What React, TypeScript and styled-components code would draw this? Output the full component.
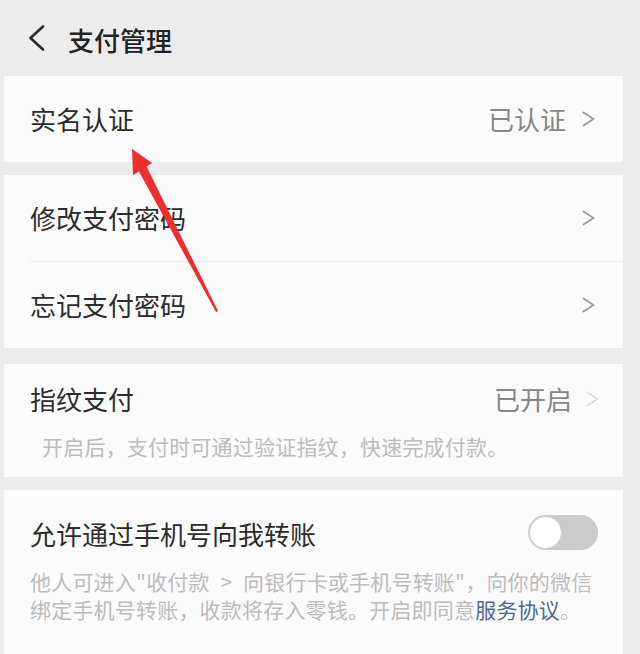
import React from "react";
import styled, { createGlobalStyle } from "styled-components";

const Global = createGlobalStyle`
  html, body { margin: 0; padding: 0; background: #ececec; }
  body { font-family: "Noto Sans CJK SC", "Noto Sans", sans-serif; -webkit-font-smoothing: antialiased; }
`;

const Page = styled.div`
  position: relative;
  width: 640px;
  height: 654px;
  overflow: hidden;
  background: #ececec;
  display: flex;
  flex-direction: column;
`;

const Header = styled.div`
  height: 76px;
  display: flex;
  align-items: center;
  padding-left: 28px;
  gap: 22px;
  flex-shrink: 0;
`;

const Title = styled.div`
  font-size: 26px;
  font-weight: 500;
  color: #222;
  line-height: 1;
  margin-top: 4px;
`;

const Card = styled.div<{ $gap?: number }>`
  width: 619px;
  margin-left: 4px;
  margin-top: ${(p) => p.$gap ?? 0}px;
  background: #fbfbfc;
  flex-shrink: 0;
`;

const Row = styled.div`
  height: 86px;
  display: flex;
  align-items: center;
  padding: 0 28px 0 26px;
`;

const Label = styled.div`
  flex: 1;
  font-size: 26px;
  color: #2c2c2c;
  line-height: 36px;
`;

const Value = styled.div<{ $mr?: number }>`
  font-size: 26px;
  color: #868686;
  line-height: 36px;
  margin-right: ${(p) => p.$mr ?? 16}px;
`;

const Divider = styled.div`
  height: 1px;
  margin-left: 26px;
  background: #ececec;
`;

const Block = styled.div<{ $top: number; $bottom: number; $right?: number }>`
  padding: ${(p) => p.$top}px ${(p) => p.$right ?? 25}px ${(p) => p.$bottom}px 26px;
`;

const HeadLine = styled.div`
  display: flex;
  align-items: center;
  height: 36px;
`;

const Desc = styled.div<{ $indent?: number; $mt?: number }>`
  margin-top: ${(p) => p.$mt ?? 13}px;
  padding-left: ${(p) => p.$indent ?? 0}px;
  font-size: 21px;
  line-height: 28px;
  letter-spacing: 0.2px;
  color: #bcbcbc;
  white-space: nowrap;
`;

const Link = styled.span`
  color: #4f6891;
`;

const Toggle = styled.div`
  width: 70px;
  height: 35px;
  border-radius: 18px;
  background: #cbcbcb;
  position: relative;
  margin-top: -4px;
`;

const Knob = styled.div`
  position: absolute;
  left: 1px;
  top: 1px;
  width: 31px;
  height: 31px;
  border-radius: 50%;
  background: #fff;
  border: 1px solid #d2d2d2;
`;

const Chevron = ({ color = "#9a9a9a" }: { color?: string }) => (
  <svg width="13" height="16" viewBox="0 0 13 16" style={{ flexShrink: 0 }}>
    <path d="M1.5 1.5 L11.5 8 L1.5 14.5" fill="none" stroke={color} strokeWidth="1.8" strokeLinejoin="miter" strokeLinecap="round" />
  </svg>
);

const BackIcon = () => (
  <svg width="18" height="26" viewBox="0 0 18 26">
    <path d="M15 1.5 L2.5 13 L15 24.5" fill="none" stroke="#2a2a2a" strokeWidth="2.6" strokeLinecap="round" strokeLinejoin="round" />
  </svg>
);

const Overlay = styled.svg`
  position: absolute;
  left: 0;
  top: 0;
  pointer-events: none;
`;

const Arrow = () => (
  <Overlay width="640" height="654" viewBox="0 0 640 654">
    <polygon
      points="132,149 152,163 146.5,166.5 218,311 216,312 139,171.5 133,175"
      fill="#ec2f2c"
    />
  </Overlay>
);

export default function App() {
  return (
    <>
      <Global />
      <Page>
        <Header>
          <BackIcon />
          <Title>支付管理</Title>
        </Header>
        <Card>
          <Row>
            <Label>实名认证</Label>
            <Value>已认证</Value>
            <Chevron />
          </Row>
        </Card>
        <Card $gap={13}>
          <Row>
            <Label>修改支付密码</Label>
            <Chevron />
          </Row>
          <Divider />
          <Row>
            <Label>忘记支付密码</Label>
            <Chevron />
          </Row>
        </Card>
        <Card $gap={16}>
          <Block $top={17} $bottom={17} $right={24}>
            <HeadLine>
              <Label>指纹支付</Label>
              <Value $mr={14}>已开启</Value>
              <Chevron color="#dadada" />
            </HeadLine>
            <Desc $indent={12} $mt={15}>开启后，支付时可通过验证指纹，快速完成付款。</Desc>
          </Block>
        </Card>
        <Card $gap={13}>
          <Block $top={26} $bottom={40}>
            <HeadLine>
              <Label>允许通过手机号向我转账</Label>
              <Toggle>
                <Knob />
              </Toggle>
            </HeadLine>
            <Desc $mt={15}>
              他人可进入"收付款{"\u2002"}&gt;{"\u2002"}向银行卡或手机号转账"，向你的微信
              <br />
              绑定手机号转账，收款将存入零钱。开启即同意<Link>服务协议</Link>。
            </Desc>
          </Block>
        </Card>
        <Arrow />
      </Page>
    </>
  );
}
